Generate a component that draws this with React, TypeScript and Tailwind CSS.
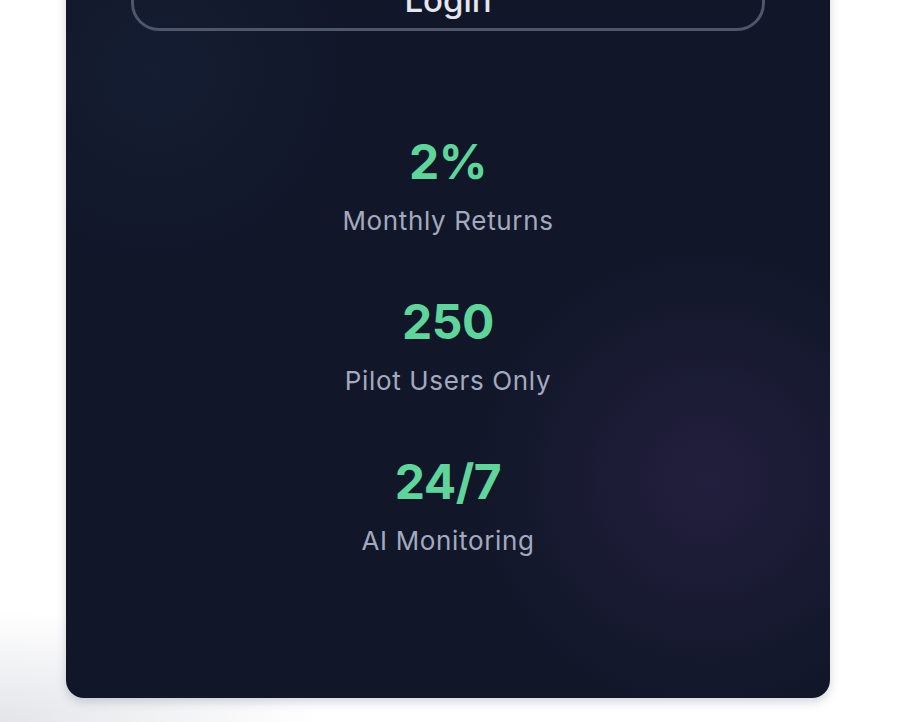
const stats = [
  { value: "2%", label: "Monthly Returns" },
  { value: "250", label: "Pilot Users Only" },
  { value: "24/7", label: "AI Monitoring" },
];

const StatItem = ({ value, label }: { value: string; label: string }) => {
  return (
    <div className="flex flex-col items-center">
      <span className="text-[48px] leading-[56px] font-bold tracking-[-0.01em] text-[#5fd49b]">
        {value}
      </span>
      <span className="mt-[15px] text-[26px] leading-[32px] tracking-[0.025em] text-[#a3a9bf]">
        {label}
      </span>
    </div>
  );
};

const App = () => {
  return (
    <div className="min-h-[722px] w-full overflow-hidden bg-white bg-[radial-gradient(ellipse_320px_110px_at_0%_100%,#e4e5e9,transparent)] font-['Inter',sans-serif]">
      <div className="relative ml-[66px] -mt-[80px] w-[764px] overflow-hidden rounded-[18px] bg-[#111729] shadow-[0_4px_10px_rgba(80,90,120,0.25)]">
        {/* background glows */}
        <div className="pointer-events-none absolute -left-[120px] -top-[60px] h-[420px] w-[420px] rounded-full bg-[radial-gradient(circle,rgba(40,60,100,0.16),transparent_65%)]" />
        <div className="pointer-events-none absolute left-[400px] top-[320px] h-[480px] w-[480px] rounded-full bg-[radial-gradient(circle,rgba(52,38,82,0.5),transparent_68%)]" />

        <div className="relative flex flex-col items-center px-[65px] pt-[51px] pb-[141px]">
          <button className="flex h-[60px] w-full items-end justify-center rounded-[28px] border-[3px] border-[#4d566b] pb-[9px] text-[33px] font-medium leading-[38px] text-[#e5e7ef]">
            Login
          </button>

          <div className="mt-[103px] flex flex-col gap-[57px]">
            {stats.map((s) => (
              <StatItem key={s.label} value={s.value} label={s.label} />
            ))}
          </div>
        </div>
      </div>
    </div>
  );
};

export default App;
